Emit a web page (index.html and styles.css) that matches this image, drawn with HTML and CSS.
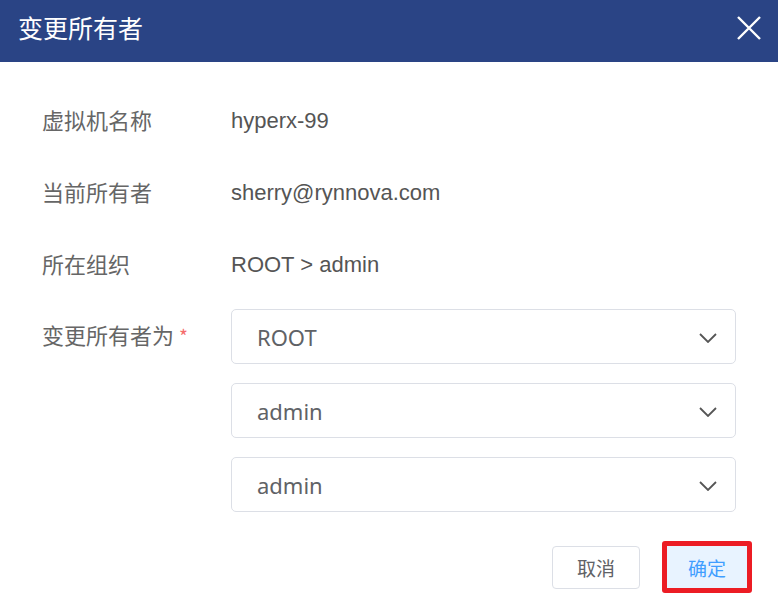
FILE: index.html
```html
<!DOCTYPE html>
<html lang="zh">
<head>
<meta charset="utf-8">
<title>变更所有者</title>
<link rel="stylesheet" href="styles.css">
</head>
<body>
<div class="dialog">
  <header class="dialog-header">
    <h1 class="dialog-title">变更所有者</h1>
    <button class="close-btn" aria-label="关闭">
      <svg width="26" height="26" viewBox="0 0 26 26"><path d="M2 2 L24 24 M24 2 L2 24" stroke="#fff" stroke-width="2.4" fill="none"/></svg>
    </button>
  </header>
  <div class="dialog-body">
    <div class="row">
      <div class="label">虚拟机名称</div>
      <div class="value">hyperx-99</div>
    </div>
    <div class="row">
      <div class="label">当前所有者</div>
      <div class="value">sherry@rynnova.com</div>
    </div>
    <div class="row">
      <div class="label">所在组织</div>
      <div class="value">ROOT &gt; admin</div>
    </div>
    <div class="row row-select">
      <div class="label">变更所有者为 <span class="req">*</span></div>
      <div class="selects">
        <div class="select"><span>ROOT</span><svg class="chev" width="18" height="10" viewBox="0 0 18 10"><path d="M1 1 L9 9 L17 1" stroke="#555" stroke-width="1.8" fill="none"/></svg></div>
        <div class="select"><span>admin</span><svg class="chev" width="18" height="10" viewBox="0 0 18 10"><path d="M1 1 L9 9 L17 1" stroke="#555" stroke-width="1.8" fill="none"/></svg></div>
        <div class="select"><span>admin</span><svg class="chev" width="18" height="10" viewBox="0 0 18 10"><path d="M1 1 L9 9 L17 1" stroke="#555" stroke-width="1.8" fill="none"/></svg></div>
      </div>
    </div>
  </div>
  <footer class="dialog-footer">
    <button class="btn btn-cancel">取消</button>
    <button class="btn btn-ok">确定</button>
  </footer>
</div>
</body>
</html>
```
FILE: styles.css
```css
* { box-sizing: border-box; }
html, body { margin: 0; padding: 0; background: #fff; }
body {
  font-family: "Liberation Sans", "Noto Sans CJK SC", sans-serif;
  width: 778px;
  height: 612px;
  overflow: hidden;
}
.dialog { width: 778px; }
.dialog-header {
  height: 62px;
  background: #2a4485;
  display: flex;
  align-items: center;
  justify-content: space-between;
  padding: 0 16px 0 18px;
}
.dialog-title {
  margin: 0;
  color: #fff;
  font-size: 25px;
  font-weight: normal;
  font-family: "Noto Sans CJK SC", sans-serif;
  line-height: 1;
  margin-top: -8px;
}
.close-btn {
  background: none;
  border: 0;
  padding: 0;
  width: 26px;
  height: 26px;
  display: flex;
  margin-top: -6px;
}
.dialog-body {
  padding: 38px 42px 0 42px;
}
.row {
  display: flex;
  align-items: center;
  height: 40px;
  margin-bottom: 32px;
}
.label {
  width: 189px;
  flex: none;
  font-size: 22px;
  color: #666;
  font-family: "Noto Sans CJK SC", sans-serif;
  margin-bottom: 3px;
}
.req { color: #f56c6c; font-size: 19px; }
.value {
  font-size: 22px;
  color: #555;
  font-family: "Liberation Sans", "Noto Sans CJK SC", sans-serif;
  margin-top: 1px;
}
.row-select {
  align-items: flex-start;
  height: auto;
  margin-top: -7px;
  margin-bottom: 0;
}
.row-select .label { padding-top: 9px; margin-bottom: 0; }
.selects {
  display: flex;
  flex-direction: column;
  gap: 19px;
  width: 505px;
}
.select {
  height: 55px;
  border: 1px solid #dcdfe6;
  border-radius: 5px;
  display: flex;
  align-items: center;
  justify-content: space-between;
  padding: 0 18px 0 25px;
  font-family: "Noto Sans", "Noto Sans CJK SC", sans-serif;
  font-size: 22px;
  color: #606266;
}
.chev { margin-top: 2px; }
.dialog-footer {
  display: flex;
  justify-content: flex-end;
  align-items: center;
  gap: 22px;
  padding: 29px 26px 0 0;
}
.btn {
  font-family: "Noto Sans CJK SC", sans-serif;
  font-size: 19px;
  border-radius: 4px;
  cursor: pointer;
}
.btn-cancel {
  width: 88px;
  height: 43px;
  background: #fff;
  border: 1px solid #dcdfe6;
  color: #606266;
}
.btn-ok {
  width: 90px;
  height: 52px;
  background: #e8f3ff;
  border: 5px solid #ec1c24;
  border-radius: 3px;
  color: #409eff;
}
```
